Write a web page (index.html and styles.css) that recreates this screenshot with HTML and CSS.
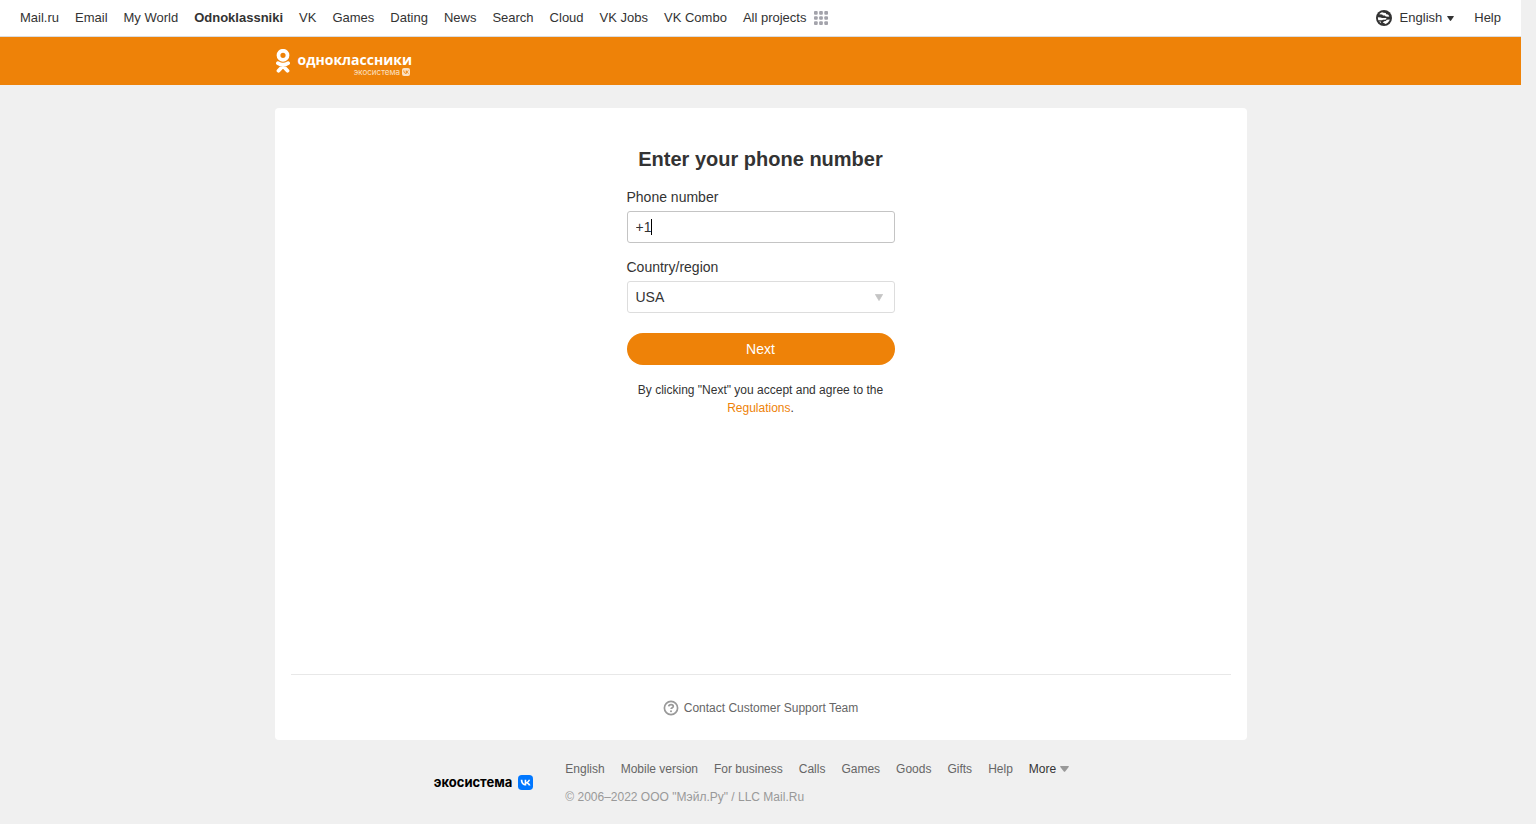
FILE: index.html
```
<!DOCTYPE html>
<html lang="en">
<head>
<meta charset="utf-8">
<meta name="viewport" content="width=device-width, initial-scale=1">
<title>Odnoklassniki</title>
<link rel="stylesheet" href="styles.css">
</head>
<body>
<nav class="toolbar" aria-label="Projects">
  <div class="toolbar-group">
    <a href="#">Mail.ru</a>
    <a href="#">Email</a>
    <a href="#">My World</a>
    <a href="#" class="current">Odnoklassniki</a>
    <a href="#">VK</a>
    <a href="#">Games</a>
    <a href="#">Dating</a>
    <a href="#">News</a>
    <a href="#">Search</a>
    <a href="#">Cloud</a>
    <a href="#">VK Jobs</a>
    <a href="#">VK Combo</a>
    <a href="#" class="all-projects">All projects
      <svg width="14" height="14" viewBox="0 0 14 14" fill="#a3a3ab" aria-hidden="true">
        <rect width="3.700" height="3.700" rx="1"/><rect x="5.150" width="3.700" height="3.700" rx="1"/><rect x="10.300" width="3.700" height="3.700" rx="1"/>
        <rect y="5.150" width="3.700" height="3.700" rx="1"/><rect x="5.150" y="5.150" width="3.700" height="3.700" rx="1"/><rect x="10.300" y="5.150" width="3.700" height="3.700" rx="1"/>
        <rect y="10.300" width="3.700" height="3.700" rx="1"/><rect x="5.150" y="10.300" width="3.700" height="3.700" rx="1"/><rect x="10.300" y="10.300" width="3.700" height="3.700" rx="1"/>
      </svg>
    </a>
  </div>
  <div class="toolbar-group toolbar-end">
    <button type="button" class="language">
      <svg width="16" height="16" viewBox="0 0 16 16" aria-hidden="true">
        <circle cx="8" cy="8" r="8" fill="#333"/>
        <path fill="#fff" d="M3.200 4.300C4 3.200 5 2.500 6 2.200l1.500.6 2.200.2.600 1.200 1.700.4 1.400 1.600-1 .6-2.600-.2-1-1.200H7l-.8-.9zM1.900 7.200l3 .2 1 .5 4.100.1.600.9-1.400.9-2.200-.1-.9.6H2.300C2 9.300 1.900 8.300 1.900 7.200zM8 11.300l1.800-.4 1-1.100 3-.2c-.5 1.700-1.700 3.100-3.200 3.900l-1.500.4-.9-.9-1.500-.3zM3 11.500l1.700.1.500 1.700z"/>
      </svg>
      <span>English</span>
      <svg width="7" height="5" viewBox="0 0 7 5" aria-hidden="true"><path fill="#333" d="M.7 0h5.600q.9 0 .4.800L4.100 4.600q-.6.700-1.200 0L.3.800Q-.2 0 .7 0z"/></svg>
    </button>
    <a href="#">Help</a>
  </div>
</nav>

<header class="header">
  <div class="container">
    <a href="#" class="logo">
      <svg width="14" height="25" viewBox="0 0 14 25" fill="none" stroke="#fff" stroke-linecap="round" stroke-linejoin="round" aria-hidden="true">
        <circle cx="7" cy="6.300" r="4.500" stroke-width="3.800"/>
        <path stroke-width="3.800" d="M1.900 14.200c3.200 2 7 2 10.200 0M7 17l-4.500 4.700M7 17l4.500 4.700"/>
      </svg>
      <span class="logo-text">
        <span class="logo-name">одноклассники</span>
        <span class="logo-eco">экосистема
          <svg width="8" height="8" viewBox="0 0 16 16" aria-hidden="true"><rect width="16" height="16" rx="4" fill="#fbe0c2"/><path fill="none" stroke="#ee8208" stroke-width="1.800" d="M3.500 5c.3 4 2 6 5 6V5M12.500 5c-.5 1.700-2 2.800-4 3 2 .2 3.500 1.300 4.300 3"/></svg>
        </span>
      </span>
    </a>
  </div>
</header>

<main class="container card">
  <form class="form">
    <h1>Enter your phone number</h1>
    <label for="phone">Phone number</label>
    <div class="field">
      <input id="phone" type="tel" value="+1">
      <span class="caret" aria-hidden="true"></span>
    </div>
    <label for="country">Country/region</label>
    <div class="field">
      <select id="country"><option>USA</option></select>
      <svg class="arrow" width="8" height="7" viewBox="0 0 8 7" aria-hidden="true"><path fill="#c4c4c4" stroke="#c4c4c4" stroke-width=".8" stroke-linejoin="round" d="M.4.4h7.200L4 6.600z"/></svg>
    </div>
    <button type="submit" class="next">Next</button>
    <p class="terms">By clicking "Next" you accept and agree to the <a href="#">Regulations</a>.</p>
  </form>
  <div class="support">
    <a href="#">
      <svg width="16" height="16" viewBox="0 0 16 16" fill="none" stroke="#999" aria-hidden="true">
        <circle cx="8" cy="8" r="6.600" stroke-width="1.700"/>
        <path stroke-width="1.700" d="M5.700 6.400c.2-2.500 4.600-2.500 4.600 0 0 1.300-2.200 1.400-2.200 2.700"/>
        <circle cx="8" cy="11.300" r="1" fill="#999" stroke="none"/>
      </svg>
      Contact Customer Support Team
    </a>
  </div>
</main>

<footer class="footer">
  <a href="#" class="eco">экосистема
    <svg width="15" height="15" viewBox="0 0 16 16" aria-hidden="true"><rect width="16" height="16" rx="4" fill="#07f"/><path fill="#fff" d="M8.600 11.300C5.100 11.300 3 9 2.900 5h1.800c.1 2.900 1.400 4.100 2.400 4.400V5h1.700v2.500c1-.1 2-1.200 2.400-2.500h1.700c-.3 1.500-1.400 2.600-2.200 3.100.8.400 2.100 1.400 2.600 3.200h-1.900c-.4-1.200-1.400-2.100-2.600-2.300v2.300z"/></svg>
  </a>
  <div>
    <nav class="footer-links" aria-label="Footer">
      <a href="#">English</a>
      <a href="#">Mobile version</a>
      <a href="#">For business</a>
      <a href="#">Calls</a>
      <a href="#">Games</a>
      <a href="#">Goods</a>
      <a href="#">Gifts</a>
      <a href="#">Help</a>
      <button type="button" class="more">More
        <svg width="9" height="6" viewBox="0 0 9 6" aria-hidden="true"><path fill="#999" d="M.8 0h7.400q1.100.2.500 1L5.200 5.400q-.7.800-1.400 0L.3 1Q-.3.200.8 0z"/></svg>
      </button>
    </nav>
    <p class="copyright">© 2006–2022 ООО "Мэйл.Ру" / LLC Mail.Ru</p>
  </div>
</footer>
</body>
</html>
```
FILE: styles.css
```
* { box-sizing: border-box; }

body {
  margin: 0;
  padding-right: 15px;
  background: #f0f0f0;
  color: #333;
  font: 14px/18px "Liberation Sans", Arial, sans-serif;
}

a { color: inherit; text-decoration: none; }
p, h1 { margin: 0; }
svg { display: block; flex: none; }
button, input, select { font: inherit; color: inherit; margin: 0; }
button { border: 0; padding: 0; background: none; cursor: pointer; }

.toolbar {
  display: flex;
  justify-content: space-between;
  align-items: center;
  height: 37px;
  padding: 0 20px;
  background: #fff;
  border-bottom: 1px solid #d9dce0;
  font-size: 13px;
  white-space: nowrap;
}
.toolbar-group { display: flex; align-items: center; gap: 16px; }
.toolbar-end { gap: 20px; }
.current { font-weight: bold; }
.all-projects { display: flex; align-items: center; gap: 8px; }
.language { display: flex; align-items: center; gap: 8px; }
.language span { margin-right: -3px; }

.container { width: 100%; max-width: 972px; margin: 0 auto; }

.header { background: #ee8208; color: #fff; padding: 12px 0 6px; }
.logo { display: inline-flex; gap: 8px; padding-left: 1px; vertical-align: top; height: 30px; }
.logo-text {
  display: flex;
  flex-direction: column;
  align-items: flex-end;
  padding-top: 3px;
}
.logo-name { font: 700 14px/16px "Open Sans", "Noto Sans", sans-serif; }
.logo-eco {
  display: flex;
  align-items: center;
  gap: 2px;
  padding-right: 2px;
  font: 8px/8px Inter, "Noto Sans", sans-serif;
  color: #fbe0c2;
}

.card {
  display: flex;
  flex-direction: column;
  justify-content: space-between;
  min-height: 632px;
  margin-top: 23px;
  padding: 0 16px;
  background: #fff;
  border-radius: 4px;
}
.form {
  display: flex;
  flex-direction: column;
  width: 268px;
  margin: 0 auto;
  padding-top: 39px;
}
.form h1 { font-size: 20px; line-height: 24px; text-align: center; margin-bottom: 17px; }
.form label { margin-bottom: 5px; }
.field { position: relative; margin-bottom: 15px; }
.field input, .field select {
  display: block;
  width: 100%;
  height: 32px;
  padding: 0 8px;
  background: #fff;
  border: 1px solid #ddd;
  border-radius: 3px;
  outline: 0;
  appearance: none;
}
.field input { border-color: #c4c4c4; }
.caret { position: absolute; left: 24px; top: 8px; width: 1px; height: 16px; background: #000; }
.arrow { position: absolute; right: 12px; top: 13px; pointer-events: none; }
.next {
  height: 32px;
  margin-top: 5px;
  border-radius: 16px;
  background: #ee8208;
  color: #fff;
}
.terms { margin-top: 16px; font-size: 12px; text-align: center; }
.terms a { color: #ee8208; }

.support {
  display: flex;
  justify-content: center;
  padding: 24px 0 23px;
  border-top: 1px solid #e8e8e8;
  font-size: 12px;
  color: #666;
}
.support a { display: flex; align-items: center; gap: 5px; }

.footer {
  display: flex;
  justify-content: center;
  align-items: center;
  gap: 32px;
  padding: 20px 18px 18px 0;
  font-size: 12px;
  color: #666;
}
.eco {
  display: flex;
  align-items: center;
  gap: 6px;
  padding-bottom: 2px;
  color: #000;
  font: 700 13px/18px Inter, "Noto Sans", sans-serif;
}
.footer-links { display: flex; gap: 16px; margin-bottom: 10px; }
.more { display: flex; align-items: center; gap: 4px; color: #333; }
.copyright { color: #999; }
```
